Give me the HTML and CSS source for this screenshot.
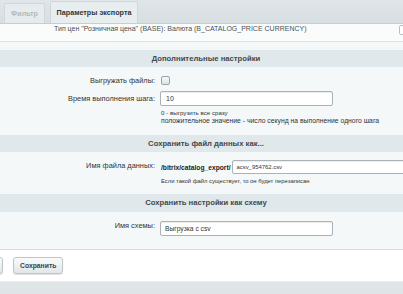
FILE: index.html
```html
<!DOCTYPE html>
<html>
<head>
<meta charset="utf-8">
<link rel="stylesheet" href="styles.css">
</head>
<body>
<div class="tabs">
  <div class="tab">Фильтр</div>
  <div class="tab active">Параметры экспорта</div>
</div>
<div class="panel">
  <div class="toprow">
    <span class="price">Тип цен "Розничная цена" (BASE): Валюта (B_CATALOG_PRICE CURRENCY)</span>
    <span class="stub"></span>
  </div>
  <div class="head h1">Дополнительные настройки</div>
  <div class="field f-check">
    <div class="label">Выгружать файлы:</div>
    <div class="value"><span class="checkbox"></span></div>
  </div>
  <div class="field f-step">
    <div class="label">Время выполнения шага:</div>
    <div class="value"><div class="input short">10</div></div>
  </div>
  <div class="field f-hint">
    <div class="label"></div>
    <div class="value"><div class="hint"><span class="h-a">0 - выгрузить все сразу</span><br><span class="h-b">положительное значение - число секунд на выполнение одного шага</span></div></div>
  </div>
  <div class="head h2">Сохранить файл данных как...</div>
  <div class="field f-file">
    <div class="label">Имя файла данных:</div>
    <div class="value"><span class="path">/bitrix/catalog_export/</span><div class="input long">acsv_954762.csv</div></div>
  </div>
  <div class="field f-hint2">
    <div class="label"></div>
    <div class="value"><div class="hint small">Если такой файл существует, то он будет перезаписан</div></div>
  </div>
  <div class="head h3">Сохранить настройки как схему</div>
  <div class="field f-scheme">
    <div class="label">Имя схемы:</div>
    <div class="value"><div class="input short scheme">Выгрузка с csv</div></div>
  </div>
</div>
<div class="footer">
  <span class="btn cut"></span>
  <span class="btn">Сохранить</span>
</div>
<div class="bottom"></div>
</body>
</html>
```
FILE: styles.css
```css
* { box-sizing: border-box; }
html, body { margin: 0; padding: 0; }
body {
  width: 403px;
  height: 294px;
  overflow: hidden;
  font-family: "Liberation Sans", Arial, sans-serif;
  font-size: 7.4px;
  color: #333;
  background: #dfe5e7;
}
.tabs {
  height: 23px;
  display: flex;
  align-items: flex-end;
  gap: 5px;
  padding-left: 4px;
  background: linear-gradient(#dfe5e8, #d8dfe2);
}
.tab {
  height: 20px;
  width: 41px;
  display: flex;
  align-items: center;
  justify-content: center;
  background: #e6ebed;
  border: 1px solid #d0d8db;
  border-bottom: none;
  border-radius: 2px 2px 0 0;
  color: #b3b9bc;
  font-weight: bold;
  font-size: 7.2px;
}
.tab.active {
  height: 22px;
  width: 88px;
  background: #e8edef;
  color: #2f373b;
  border-color: #cfd7da;
}
.panel {
  width: 412px;
  height: 227px;
  overflow: hidden;
  background: #f4f8f9;
  border-top: 1px solid #c5ced1;
  border-bottom: 1px solid #d6dee0;
}
.toprow {
  height: 18px;
  background: #fafcfc;
  border-bottom: 1px solid #dce3e5;
  padding-left: 54px;
  position: relative;
  color: #4a5155;
  font-size: 7px;
  line-height: 9px;
}
.stub {
  position: absolute;
  left: 399px;
  top: 1px;
  width: 10px;
  height: 10px;
  border: 1px solid #b7c0c3;
  border-radius: 2px;
  background: #fff;
}
.head {
  height: 17px;
  background: #e1e8eb;
  color: #3f484d;
  font-weight: bold;
  text-align: center;
  line-height: 17px;
  font-size: 7.7px;
}
.h1 { margin-top: 8px; }
.h3 { height: 18px; line-height: 18px; }
.field { display: flex; align-items: flex-start; }
.label {
  width: 157px;
  flex: none;
  text-align: right;
  padding-right: 2px;
  color: #333;
  line-height: 9px;
}
.value { flex: 1; padding-left: 3px; display: flex; align-items: flex-start; }
.f-check { height: 23px; padding-top: 9px; }
.checkbox {
  width: 9px; height: 9px;
  margin-left: 1px;
  border: 1px solid #9aa5a9;
  border-radius: 2px;
  background: linear-gradient(#f6f8f8, #dde3e5);
}
.f-step { height: 17px; padding-top: 1px; }
.f-step .label { padding-top: 3px; }
.input {
  height: 15px;
  border: 1px solid #a9b3b7;
  border-radius: 2px;
  background: #fff;
  box-shadow: inset 0 1px 1px rgba(0,0,0,0.08);
  padding-left: 5px;
  line-height: 13px;
  color: #333;
  font-size: 7px;
}
.short { width: 173px; }
.scheme { font-size: 6.7px; padding-left: 4px; }
.long { width: 180px; margin-left: 1px; height: 14px; line-height: 12px; font-size: 5.9px; padding-left: 4px; }
.f-hint { height: 28px; padding-top: 2px; }
.hint { color: #333; line-height: 8px; padding-left: 1px; }
.h-a { font-size: 6.2px; }
.h-b { font-size: 6.8px; }
.f-file { height: 25px; padding-top: 8px; }
.f-file .label { padding-top: 1px; }
.f-file .value { padding-left: 4px; }
.path { font-weight: bold; color: #222; font-size: 6.7px; line-height: 9px; padding-top: 3px; }
.f-hint2 { height: 17px; }
.small { font-size: 5.85px; }
.f-scheme { height: 37px; padding-top: 9px; }
.footer {
  height: 31px;
  background: #fff;
  display: flex;
  align-items: center;
  gap: 10px;
}
.btn {
  height: 17px;
  padding: 0 6px;
  border: 1px solid #bcc5c8;
  border-radius: 3px;
  background: linear-gradient(#fafbfb, #e1e6e8);
  box-shadow: 0 1px 1px rgba(0,0,0,0.12);
  color: #3a4347;
  font-weight: bold;
  font-size: 6.8px;
  line-height: 15px;
}
.btn.cut { width: 14px; margin-left: -11px; }
.bottom { height: 13px; background: #dfe5e7; border-top: 1px solid #e7ecee; }
```
